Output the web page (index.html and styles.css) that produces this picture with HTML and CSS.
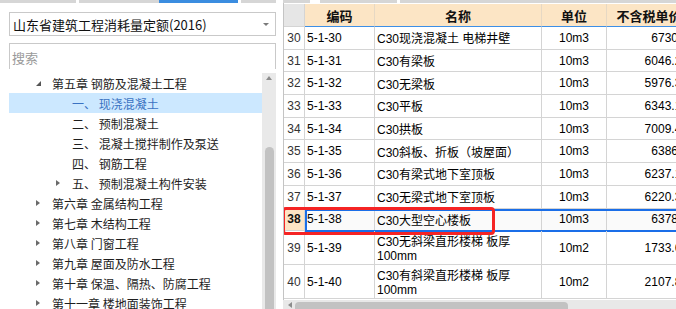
FILE: index.html
```html
<!DOCTYPE html>
<html lang="zh-CN">
<head>
    <meta charset="UTF-8">
    <title>定额库</title>
    <link rel="stylesheet" href="styles.css">
</head>
<body>

    <div class="app">
        <aside class="library">
            <div class="tabline"></div>
            <div class="select">山东省建筑工程消耗量定额(2016)<span class="caret"></span></div>
            <div class="search"><input type="text" placeholder="搜索"></div>

            <div class="tree-wrap">
                <ul class="tree">
                    <li class="chapter"><span class="toggle open"></span>第五章 钢筋及混凝土工程</li>
                    <li class="section selected"><span class="toggle"></span>一、 现浇混凝土</li>
                    <li class="section"><span class="toggle"></span>二、 预制混凝土</li>
                    <li class="section"><span class="toggle"></span>三、 混凝土搅拌制作及泵送</li>
                    <li class="section"><span class="toggle"></span>四、 钢筋工程</li>
                    <li class="section"><span class="toggle closed"></span>五、 预制混凝土构件安装</li>
                    <li class="chapter"><span class="toggle closed"></span>第六章 金属结构工程</li>
                    <li class="chapter"><span class="toggle closed"></span>第七章 木结构工程</li>
                    <li class="chapter"><span class="toggle closed"></span>第八章 门窗工程</li>
                    <li class="chapter"><span class="toggle closed"></span>第九章 屋面及防水工程</li>
                    <li class="chapter"><span class="toggle closed"></span>第十章 保温、隔热、防腐工程</li>
                    <li class="chapter"><span class="toggle closed"></span>第十一章 楼地面装饰工程</li>
                </ul>
                <div class="vscroll">
                    <span class="arrow-up"></span>
                    <span class="thumb"></span>
                </div>
            </div>
        </aside>

        <section class="sheet">
            <div class="tabline"></div>
            <div class="table">
                <div class="row head">
                    <div class="num"></div>
                    <div class="code">编码</div>
                    <div class="name">名称</div>
                    <div class="unit">单位</div>
                    <div class="price">不含税单价</div>
                </div>
                <div class="row">
                    <div class="num">30</div><div class="code">5-1-30</div><div class="name">C30现浇混凝土 电梯井壁</div><div class="unit">10m3</div><div class="price">6730.5</div>
                </div>
                <div class="row">
                    <div class="num">31</div><div class="code">5-1-31</div><div class="name">C30有梁板</div><div class="unit">10m3</div><div class="price">6046.21</div>
                </div>
                <div class="row">
                    <div class="num">32</div><div class="code">5-1-32</div><div class="name">C30无梁板</div><div class="unit">10m3</div><div class="price">5976.35</div>
                </div>
                <div class="row">
                    <div class="num">33</div><div class="code">5-1-33</div><div class="name">C30平板</div><div class="unit">10m3</div><div class="price">6343.12</div>
                </div>
                <div class="row">
                    <div class="num">34</div><div class="code">5-1-34</div><div class="name">C30拱板</div><div class="unit">10m3</div><div class="price">7009.46</div>
                </div>
                <div class="row">
                    <div class="num">35</div><div class="code">5-1-35</div><div class="name">C30斜板、折板（坡屋面）</div><div class="unit">10m3</div><div class="price">6386.9</div>
                </div>
                <div class="row">
                    <div class="num">36</div><div class="code">5-1-36</div><div class="name">C30有梁式地下室顶板</div><div class="unit">10m3</div><div class="price">6237.15</div>
                </div>
                <div class="row">
                    <div class="num">37</div><div class="code">5-1-37</div><div class="name">C30无梁式地下室顶板</div><div class="unit">10m3</div><div class="price">6220.38</div>
                </div>
                <div class="row current">
                    <div class="num">38</div><div class="code">5-1-38</div><div class="name">C30大型空心楼板</div><div class="unit">10m3</div><div class="price">6378.4</div>
                    <span class="mark"></span>
                </div>
                <div class="row tall">
                    <div class="num">39</div><div class="code">5-1-39</div><div class="name"><span>C30无斜梁直形楼梯 板厚<br>100mm</span></div><div class="unit">10m2</div><div class="price">1733.62</div>
                </div>
                <div class="row tall">
                    <div class="num">40</div><div class="code">5-1-40</div><div class="name"><span>C30有斜梁直形楼梯 板厚<br>100mm</span></div><div class="unit">10m2</div><div class="price">2107.84</div>
                </div>
            </div>
            <div class="hscroll">
                <span class="arrow-left"></span>
                <span class="thumb"></span>
            </div>
        </section>
    </div>

</body>
</html>
```

FILE: styles.css
```css
* {
    margin: 0;
    padding: 0;
    box-sizing: border-box;
}

body {
    font-family: "Noto Sans CJK SC", sans-serif;
    background: #fff;
    color: #222;
    width: 676px;
    height: 309px;
    overflow: hidden;
}

.app {
    display: flex;
    height: 309px;
}

/* left: library tree */

.library {
    width: 276px;
    display: flex;
    flex-direction: column;
    flex-shrink: 0;
}

.tabline {
    height: 3px;
    flex-shrink: 0;
}

.library .tabline {
    background: linear-gradient(to right, #d6d6d6 0 76px, #fff 76px 79px, #d6d6d6 79px 159px, #3b8de0 159px 238px, #fff 238px 241px, #d6d6d6 241px);
}

.sheet .tabline {
    background: linear-gradient(to right, #d6d6d6 0 27px, #fff 27px 37px, #d6d6d6 37px 114px, #fff 114px 117px, #d6d6d6 117px);
}

.select {
    margin: 9px 0 0 9px;
    height: 24px;
    border: 1px solid #c9c9c9;
    font-size: 13px;
    padding: 0 6px 0 3px;
    display: flex;
    align-items: center;
    justify-content: space-between;
    color: #111;
}

.caret {
    border-left: 3px solid transparent;
    border-right: 3px solid transparent;
    border-top: 3px solid #7a7a7a;
}

.search {
    margin: 7px 0 0 9px;
    height: 26px;
    border: 1px solid #c9c9c9;
}

.search input {
    width: 100%;
    height: 100%;
    border: none;
    outline: none;
    padding-left: 2px;
    font-family: inherit;
    font-size: 13px;
}

.search input::placeholder {
    color: #9a9a9a;
}

.tree-wrap {
    margin: 4px 0 0 9px;
    flex: 1;
    min-height: 0;
    display: flex;
    overflow: hidden;
}

.tree {
    flex: 1;
    list-style: none;
}

.tree li {
    height: 20px;
    display: flex;
    align-items: center;
    font-size: 12px;
    white-space: nowrap;
    color: #1e1e1e;
}

.tree .chapter {
    padding-left: 27px;
}

.tree .section {
    padding-left: 47px;
}

.tree .selected {
    background: #cce8ff;
    color: #3a72c2;
}

.toggle {
    width: 16px;
    height: 20px;
    display: flex;
    align-items: center;
}

.toggle.closed::before {
    content: "";
    border-left: 4px solid #6a6a6a;
    border-top: 3.5px solid transparent;
    border-bottom: 3.5px solid transparent;
}

.toggle.open::before {
    content: "";
    border-bottom: 5px solid #555;
    border-left: 5px solid transparent;
}

.vscroll {
    width: 14px;
    background: #e9e9e9;
    display: flex;
    flex-direction: column;
    align-items: center;
}

.arrow-up {
    margin-top: 3px;
    border-bottom: 4px solid #8c8c8c;
    border-left: 3.5px solid transparent;
    border-right: 3.5px solid transparent;
}

.vscroll .thumb {
    margin-top: 67px;
    width: 9px;
    flex: 1;
    background: #c2c2c2;
    border-radius: 5px 5px 0 0;
}

/* right: norm table */

.sheet {
    margin-left: 7px;
    flex: 1;
    display: flex;
    flex-direction: column;
    overflow: hidden;
}

.table {
    flex: 1;
    min-height: 0;
    overflow: hidden;
    padding-top: 1px;
    border-left: 1px solid #c4c4c4;
}

.row {
    display: grid;
    grid-template-columns: 21px 70px 167px 65px 85px;
    height: 22.7px;
    font-family: "Liberation Sans", "Noto Sans CJK SC", sans-serif;
    font-size: 12px;
    color: #000;
    position: relative;
}

.row > div {
    border-right: 1px solid #d4d4d4;
    border-bottom: 1px solid #d4d4d4;
    display: flex;
    align-items: center;
    white-space: nowrap;
    overflow: hidden;
}

.row .num {
    justify-content: center;
    color: #333;
}

.row .code,
.row .name {
    padding-left: 2px;
}

.row .unit {
    justify-content: center;
}

.row .price {
    justify-content: flex-end;
    padding-right: 3px;
}

.row.tall {
    height: 34px;
}

.row.tall .name span {
    display: block;
    line-height: 14px;
    padding-top: 2px;
}

.head {
    height: 23px;
}

.head > div {
    background: #fce5c5;
    border-right-color: #e6d8c4;
    border-bottom: 1px solid #3d8fe6;
    justify-content: center;
    font-family: "Noto Sans CJK SC", sans-serif;
    font-size: 13px;
    font-weight: bold;
    color: #111;
}

.head .code,
.head .name {
    padding-left: 0;
}

.head .price {
    justify-content: center;
    padding-right: 0;
}

.head .num {
    background: #e6e6e6;
    border-right-color: #d4d4d4;
    border-bottom-color: #d4d4d4;
}

.current > div {
    background: #fafafa;
}

.current .num {
    background: #fde4c4;
    font-weight: bold;
    color: #111;
}

/* selection frame and the red note drawn over row 38 */
.current::after {
    content: "";
    position: absolute;
    top: 0;
    bottom: -1px;
    left: 21px;
    right: -10px;
    border: 2px solid #1a6ee8;
    border-right: none;
}

.mark {
    position: absolute;
    top: -2px;
    bottom: -4px;
    left: -2px;
    width: 213px;
    border: 3px solid #f52424;
    border-radius: 4px;
    z-index: 2;
}

.hscroll {
    height: 9px;
    flex-shrink: 0;
    background: #e8e8e8;
    display: flex;
    align-items: flex-end;
}

.arrow-left {
    margin: 0 0 1px 5px;
    border-right: 4px solid #8c8c8c;
    border-top: 3.5px solid transparent;
    border-bottom: 3.5px solid transparent;
}

.hscroll .thumb {
    margin-left: 3px;
    width: 273px;
    height: 7px;
    background: #c2c2c2;
    border-radius: 4px 4px 0 0;
}
```
